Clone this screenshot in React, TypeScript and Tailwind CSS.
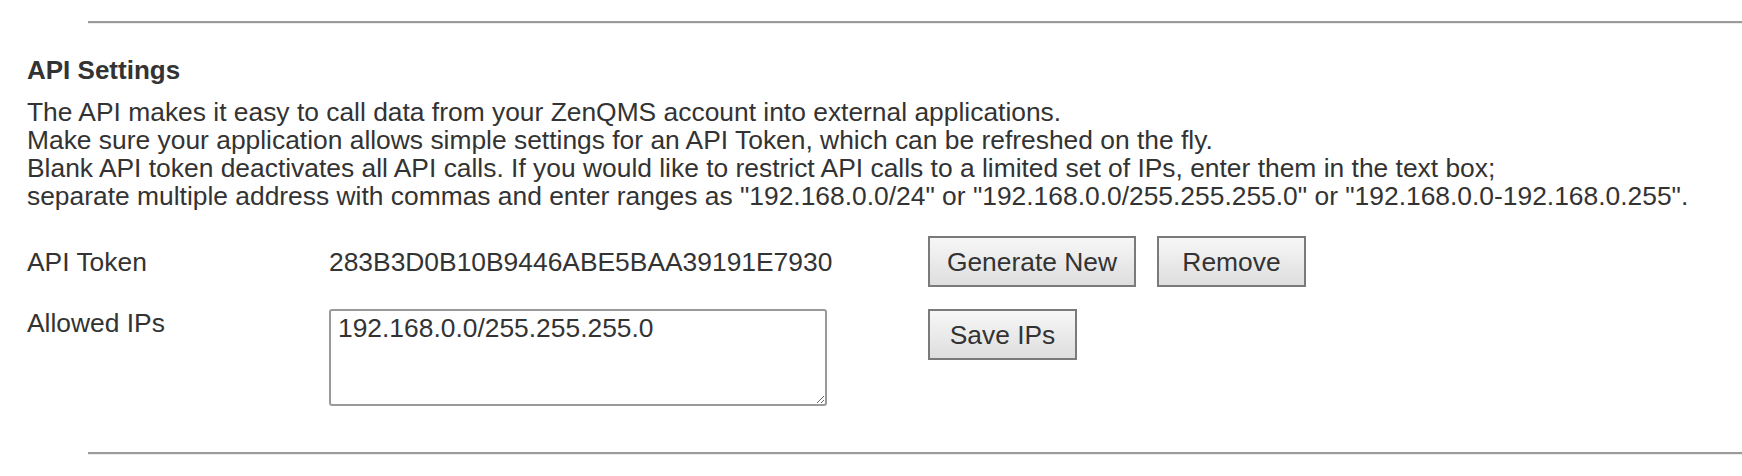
import React from "react";

export default function App() {
  const btn =
    "h-[51px] border-2 border-[#7a7a7a] bg-gradient-to-b from-[#f7f7f7] to-[#dedede] text-[26.4px] leading-[28px] text-[#333] flex items-center justify-center";
  return (
    <div
      className="w-[1742px] h-[476px] bg-white text-[#333] overflow-hidden"
      style={{ fontFamily: '"Liberation Sans", Arial, Helvetica, sans-serif' }}
    >
      <div className="pt-[21px] pl-[88px]">
        <div className="h-[2px] bg-[#9b9b9b]" />
        <div className="h-[1px] bg-[#ececec]" />
      </div>
      <div className="pl-[27px]">
        <h2 className="mt-[32px] text-[26px] leading-[28px] font-bold">API Settings</h2>
        <div className="mt-[14px] text-[26.4px] leading-[28px]">
          <div>The API makes it easy to call data from your ZenQMS account into external applications.</div>
          <div>Make sure your application allows simple settings for an API Token, which can be refreshed on the fly.</div>
          <div>
            Blank API token deactivates all API calls. If you would like to restrict API calls to a limited set of IPs, enter
            them in the text box;
          </div>
          <div>
            separate multiple address with commas and enter ranges as "192.168.0.0/24" or "192.168.0.0/255.255.255.0" or
            "192.168.0.0-192.168.0.255".
          </div>
        </div>

        <div className="mt-[26px] flex items-center text-[26.4px] leading-[28px]">
          <div className="w-[302px]">API Token</div>
          <div className="w-[599px]">283B3D0B10B9446ABE5BAA39191E7930</div>
          <div className="flex gap-[21px]">
            <button className={`${btn} w-[208px]`}>Generate New</button>
            <button className={`${btn} w-[149px]`}>Remove</button>
          </div>
        </div>

        <div className="mt-[22px] flex items-start text-[26.4px] leading-[28px]">
          <div className="w-[302px]">Allowed IPs</div>
          <div className="w-[599px]">
            <textarea
              className="block w-[498px] h-[97px] border-2 border-[#9a9a9a] rounded-[3px] px-[7px] pt-[3px] text-[26.4px] leading-[28px] text-[#333] outline-none"
              style={{ fontFamily: '"Liberation Sans", Arial, Helvetica, sans-serif' }}
              defaultValue="192.168.0.0/255.255.255.0"
            />
          </div>
          <button className={`${btn} w-[149px]`}>Save IPs</button>
        </div>
      </div>
      <div className="mt-[46px] pl-[88px]">
        <div className="h-[2px] bg-[#9b9b9b]" />
        <div className="h-[1px] bg-[#ececec]" />
      </div>
    </div>
  );
}
